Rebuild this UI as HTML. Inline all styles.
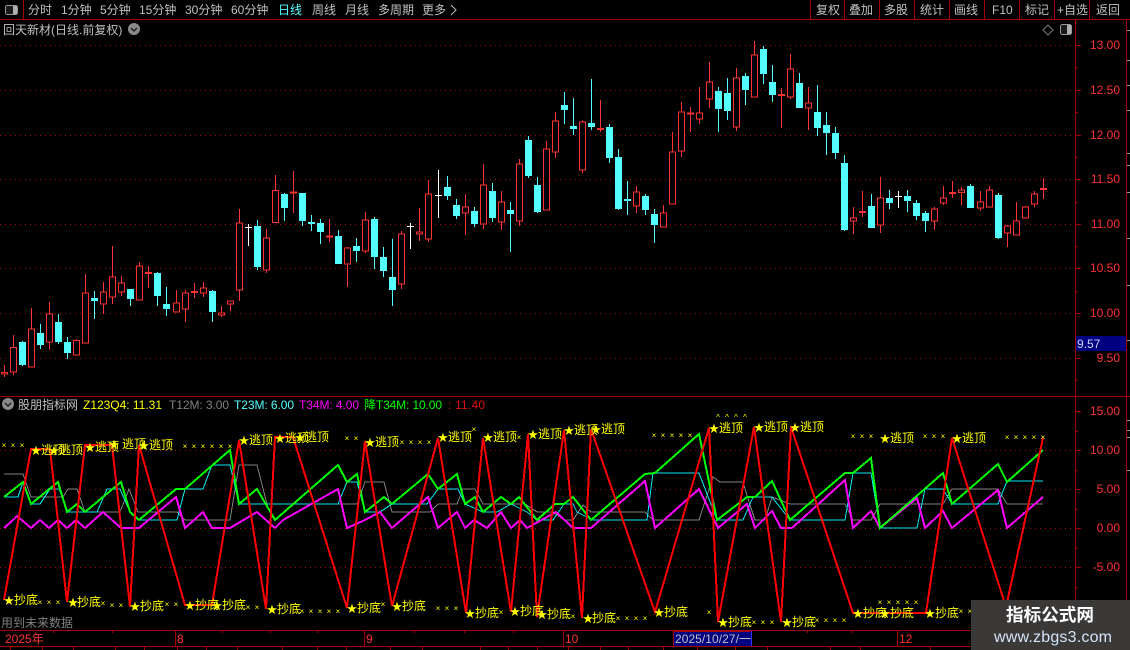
<!DOCTYPE html>
<html><head><meta charset="utf-8"><title>回天新材</title>
<style>
html,body{margin:0;padding:0;background:#000;width:1130px;height:650px;overflow:hidden}
svg{display:block;position:absolute;left:0;top:0}
text{font-family:"Liberation Sans","WenQuanYi Zen Hei","Noto Sans CJK SC",sans-serif;font-size:12px}
.m{fill:#c0c0c0}
.a{fill:#ff3232;text-anchor:end}
.t{fill:#ff3232}
.y{fill:#ffff00}
.st{fill:#ffff00;font-family:"DejaVu Sans",sans-serif;font-size:13px;text-anchor:middle}
.xx{fill:#ffff00;font-size:8px;text-anchor:middle}
.c{shape-rendering:crispEdges}
.rw{stroke:#ff3232;stroke-width:3;fill:none}
.cw{stroke:#54ffff;stroke-width:3;fill:none}
.ww{stroke:#fff;stroke-width:3;fill:none}
.rb{stroke:#ff3232;stroke-width:3;fill:#000}
.cb{fill:#54ffff}
.rf{fill:#ff3232}
.wf{fill:#fff}
.g{stroke:#a01010;stroke-width:1;stroke-dasharray:1 4;fill:none}
.l{stroke:#a80000;stroke-width:1;fill:none}
.ln{fill:none;shape-rendering:crispEdges;stroke-linejoin:miter}
</style></head><body>
<svg width="1130" height="650" viewBox="0 0 1130 650">
<rect width="1130" height="650" fill="#000"/>

<!-- grid -->
<path class="g c" d="M0 45.5H1075M0 90.5H1075M0 135.5H1075M0 179.5H1075M0 224.5H1075M0 268.5H1075M0 313.5H1075M0 358.5H1075M0 450.5H1075M0 489.5H1075M0 528.5H1075M0 567.5H1075"/>

<!-- frame lines -->
<g class="c">
<path class="l" d="M0 19.5H1130M23.5 0V19M810.5 0V19M844.5 0V19M879.5 0V19M914.5 0V19M949.5 0V19M984.5 0V19M1019.5 0V19M1054.5 0V19M1089.5 0V19M1075.5 20V630M1126.5 20V630M0 396.5H1130M0 630.5H1130M0 646.5H1130"/>
<path class="l" d="M1075 45.5h6M1075 90.5h6M1075 135.5h6M1075 179.5h6M1075 224.5h6M1075 268.5h6M1075 313.5h6M1075 358.5h6M1075 67.5h3M1075 112.5h3M1075 157.5h3M1075 202.5h3M1075 246.5h3M1075 291.5h3M1075 336.5h3M1075 380.5h3M1075 411.5h6M1075 450.5h6M1075 489.5h6M1075 528.5h6M1075 567.5h6M1075 431.5h3M1075 470.5h3M1075 509.5h3M1075 548.5h3M1075 587.5h3"/>
<path stroke="#999" d="M1127 30.5h3M1127 60.5h3M1127 85.5h3M1127 110.5h3M1127 153.5h3M1127 165.5h3M1127 192.5h3M1127 238.5h3M1127 285.5h3M1127 340.5h3M1127 420.5h3M1127 430.5h3M1127 437.5h3M1127 470.5h3"/>
<path class="l" d="M175.5 631V646M364.5 631V646M563.5 631V646M897.5 631V646M53.5 631v2M112.5 631v2M222.5 631v2M270.5 631v2M317.5 631v2M414.5 631v2M464.5 631v2M513.5 631v2M807.5 631v2M852.5 631v2M10.5 647v3M42.5 647v3M73.5 647v3M115.5 647v3M144.5 647v3M177.5 647v3M206.5 647v3M237.5 647v3M282.5 647v3M317.5 647v3M346.5 647v3M390.5 647v3M422.5 647v3M480.5 647v3M508.5 647v3M537.5 647v3M568.5 647v3M600.5 647v3M628.5 647v3M663.5 647v3M697.5 647v3M735.5 647v3M767.5 647v3M830.5 647v3M860.5 647v3M930.5 647v3"/>
<rect x="673.5" y="631.5" width="78" height="15" fill="#000080" stroke="#a80000"/>
<rect x="1076" y="336" width="50" height="15" fill="#000080"/>
<path d="M751.5 631V646" stroke="#3030ff"/>
</g>

<!-- toolbar -->
<rect x="5.5" y="5.5" width="12" height="9" rx="2" fill="#1a1a1a" stroke="#9a9a9a"/><rect x="13" y="6" width="4" height="8" fill="#b0b0b0"/>
<g class="m">
<text x="28" y="14">分时</text><text x="61" y="14">1分钟</text><text x="100" y="14">5分钟</text><text x="139" y="14">15分钟</text><text x="185" y="14">30分钟</text><text x="231" y="14">60分钟</text>
<text x="278" y="14" style="fill:#54ffff">日线</text><text x="312" y="14">周线</text><text x="345" y="14">月线</text><text x="378" y="14">多周期</text><text x="422" y="14">更多</text>
<text x="816" y="14">复权</text><text x="849" y="14">叠加</text><text x="884" y="14">多股</text><text x="920" y="14">统计</text><text x="954" y="14">画线</text><text x="992" y="14">F10</text><text x="1025" y="14">标记</text><text x="1057" y="14">+自选</text><text x="1096" y="14">返回</text>
<text x="3" y="34">回天新材(日线.前复权)</text>
</g>
<path d="M451 5l5 5-5 5" stroke="#c0c0c0" fill="none"/>
<circle cx="134" cy="29" r="6" fill="#8a8a8a"/><path d="M131 28l3 3 3-3" stroke="#222" stroke-width="1.5" fill="none"/>
<path d="M1048 25l5 5-5 5-5-5z" fill="none" stroke="#777"/>
<rect x="1060.5" y="24.5" width="11" height="10" rx="2" fill="#1a1a1a" stroke="#9a9a9a"/><rect x="1067" y="25" width="4" height="9" fill="#b0b0b0"/>

<!-- candles A -->
<g class="c" transform="translate(0.1667,200) scale(.33333)">
<path class="rw" d="M13 495V531M40 405V525M94 324V503M148 306V450M229 417V467M256 222V431M310 246V342M337 138V312M364 228V288M418 186V302M445 198V264M529 270V338M556 270V366M583 249V294M610 246V291M664 318V351M691 301V333M718 27V303M799 87V219"/>
<path class="cw" d="M67 423V498M121 372V447M175 342V432M202 411V477M283 273V357M391 267V318M472 216V318M499 261V348M637 270V366M772 60V210"/>
<path class="ww" d="M745 72V138"/>
<path class="rb" d="M4 517.5h18V522.5h-18zM31 442.5h18V516.5h-18zM85 386.5h18V501.5h-18zM139 341.5h18V426.5h-18zM220 421.5h18V465.5h-18zM247 278.5h18V429.5h-18zM301 275.5h18V312.5h-18zM328 230.5h18V291.5h-18zM355 248.5h18V276.5h-18zM409 197.5h18V300.5h-18zM520 308.5h18V336.5h-18zM547 278.5h18V327.5h-18zM601 263.5h18V279.5h-18zM655 338.5h18V345.5h-18zM682 302.5h18V312.5h-18zM709 68.5h18V270.5h-18zM790 113.5h18V210.5h-18z"/>
<path class="cb" d="M56.5 426h21V495h-21zM110.5 399h21V435h-21zM164.5 366h21V426h-21zM191.5 426h21V459h-21zM272.5 294h21V303h-21zM380.5 267h21V297h-21zM461.5 219h21V288h-21zM488.5 312h21V327h-21zM626.5 273h21V336h-21zM761.5 78h21V201h-21z"/>
<path class="rf" d="M434.5 216h21V222h-21zM572.5 273h21V279h-21z"/>
<path class="wf" d="M734.5 81h21V84h-21z"/>
</g>
<!-- candles B -->
<g class="c" transform="translate(280.1667,130) scale(.33333)">
<path class="rw" d="M40 123V249M148 267V336M202 351V471M256 246V369M364 303V477M418 234V333M445 150V336M556 192V315M610 102V297M664 183V300M718 87V288M799 33V242"/>
<path class="cw" d="M13 189V273M67 189V288M94 255V303M121 267V342M175 300V402M229 324V396M283 261V417M310 351V441M337 327V528M502 138V210M529 207V267M583 231V291M637 159V276M691 216V366M745 18V144M772 141V249"/>
<path class="ww" d="M391 279V357M475 120V264"/>
<path class="rb" d="M31 185.5h18V188.5h-18zM139 317.5h18V321.5h-18zM193 353.5h18V402.5h-18zM247 269.5h18V363.5h-18zM355 311.5h18V462.5h-18zM409 305.5h18V312.5h-18zM436 191.5h18V327.5h-18zM547 230.5h18V248.5h-18zM601 164.5h18V282.5h-18zM655 215.5h18V276.5h-18zM709 101.5h18V273.5h-18zM790 56.5h18V240.5h-18z"/>
<path class="cb" d="M2.5 192h21V234h-21zM56.5 189h21V273h-21zM83.5 276h21V282h-21zM110.5 279h21V306h-21zM164.5 318h21V402h-21zM218.5 348h21V363h-21zM272.5 267h21V381h-21zM299.5 381h21V423h-21zM326.5 441h21V480h-21zM491.5 171h21V198h-21zM518.5 225h21V258h-21zM572.5 243h21V282h-21zM626.5 183h21V264h-21zM680.5 240h21V252h-21zM734.5 30h21V138h-21zM761.5 165h21V246h-21z"/>
<path class="wf" d="M380.5 288h21V291h-21zM464.5 195h21V198h-21z"/>
</g>
<!-- candles C -->
<g class="c" transform="translate(540.1667,30) scale(.33333)">
<path class="rw" d="M46 246V384M127 271V429M181 210V306M289 468V549M370 525V593M397 306V524M424 216V381M451 231V306M478 171V282M508 96V234M589 114V303M643 33V203M724 174V294M751 72V207M805 171V300"/>
<path class="cw" d="M73 186V282M100 204V315M154 147V300M208 282V399M235 357V540M262 453V555M316 492V555M343 537V639M535 171V306M562 144V270M616 129V225M670 48V162M697 105V216M778 129V234M832 165V318"/>
<path class="rb" d="M37 272.5h18V366.5h-18zM118 275.5h18V420.5h-18zM280 485.5h18V528.5h-18zM361 548.5h18V591.5h-18zM388 365.5h18V522.5h-18zM415 245.5h18V363.5h-18zM442 248.5h18V252.5h-18zM469 248.5h18V267.5h-18zM499 155.5h18V207.5h-18zM580 143.5h18V291.5h-18zM634 74.5h18V201.5h-18zM742 116.5h18V201.5h-18zM796 218.5h18V234.5h-18z"/>
<path class="cb" d="M62.5 225h21V240h-21zM89.5 288h21V297h-21zM143.5 279h21V291h-21zM197.5 291h21V384h-21zM224.5 381h21V537h-21zM251.5 507h21V513h-21zM305.5 498h21V540h-21zM332.5 552h21V585h-21zM524.5 183h21V237h-21zM551.5 189h21V243h-21zM605.5 138h21V180h-21zM659.5 57h21V132h-21zM686.5 156h21V195h-21zM767.5 159h21V234h-21zM821.5 246h21V294h-21z"/>
<path class="rf" d="M170.5 294h21V300h-21zM713.5 192h21V198h-21z"/>
</g>
<!-- candles D -->
<g class="c" transform="translate(810.1667,140) scale(.33333)">
<path class="rw" d="M130 201V282M157 153V231M211 111V279M373 201V270M400 138V195M427 123V174M454 141V195M511 153V213M538 138V203M592 255V321M619 186V287M646 198V236M673 153V201M700 114V177"/>
<path class="cw" d="M49 -84V45M76 -39V57M103 45V273M184 162V264M238 150V207M292 150V216M319 180V240M346 213V276M481 132V204M565 159V297"/>
<path class="ww" d="M265 153V204"/>
<path class="rb" d="M121 233.5h18V243.5h-18zM202 173.5h18V255.5h-18zM364 206.5h18V243.5h-18zM391 173.5h18V189.5h-18zM445 149.5h18V157.5h-18zM502 185.5h18V204.5h-18zM529 149.5h18V201.5h-18zM583 257.5h18V279.5h-18zM610 242.5h18V285.5h-18zM637 200.5h18V234.5h-18zM664 161.5h18V192.5h-18z"/>
<path class="cb" d="M38.5 -45h21V-21h-21zM65.5 -21h21V39h-21zM92.5 69h21V270h-21zM173.5 198h21V264h-21zM227.5 174h21V189h-21zM281.5 168h21V183h-21zM308.5 189h21V228h-21zM335.5 219h21V243h-21zM470.5 138h21V204h-21zM554.5 165h21V294h-21z"/>
<path class="rf" d="M146.5 213h21V219h-21zM416.5 156h21V162h-21zM689.5 144h21V150h-21z"/>
<path class="wf" d="M254.5 168h21V171h-21z"/>
</g>
<path class="c" d="M275.5 175V191" stroke="#ff3232" fill="none"/>
<rect class="c" x="272.5" y="190.5" width="6" height="32" fill="#000" stroke="#ff3232"/>

<!-- axis labels -->
<g>
<text class="a" x="1120" y="49">13.00</text><text class="a" x="1120" y="94">12.50</text><text class="a" x="1120" y="139">12.00</text><text class="a" x="1120" y="183">11.50</text><text class="a" x="1120" y="228">11.00</text><text class="a" x="1120" y="272">10.50</text><text class="a" x="1120" y="317">10.00</text><text class="a" x="1120" y="362">9.50</text>
<text x="1077" y="348" style="fill:#c8d8ff">9.57</text>
<text class="a" x="1120" y="415">15.00</text><text class="a" x="1120" y="454">10.00</text><text class="a" x="1120" y="493">5.00</text><text class="a" x="1120" y="532">0.00</text><text class="a" x="1120" y="571">-5.00</text>
</g>

<!-- indicator header -->
<circle cx="8" cy="404" r="6" fill="#8a8a8a"/><path d="M5 403l3 3 3-3" stroke="#222" stroke-width="1.5" fill="none"/>
<text x="18" y="409" class="m">股朋指标网</text>
<text x="83" y="409" class="y" textLength="79">Z123Q4: 11.31</text>
<text x="169" y="409" style="fill:#808080" textLength="60">T12M: 3.00</text>
<text x="234" y="409" style="fill:#54ffff" textLength="60">T23M: 6.00</text>
<text x="299" y="409" style="fill:#ff00ff" textLength="60">T34M: 4.00</text>
<text x="364" y="409" style="fill:#00ff00" textLength="78">降T34M: 10.00</text>
<text x="448" y="409" style="fill:#e01010" textLength="37">: 11.40</text>

<!-- indicator lines -->
<polyline class="ln" stroke="#808080" points="4,474 23,474 31,497 63,497 68,489 77,489 85,512 120,512 129,489 138,512 177,512 185,520 230,520 239,465 257,465 267,504 357,504 365,482 384,482 392,512 430,512 438,504 457,504 463,489 475,489 483,504 525,504 537,512 553,512 564,520 573,520 583,505 591,512 645,512 653,520 699,520 713,477 720,482 743,482 750,505 755,520 765,520 772,497 790,504 845,504 853,520 871,520 880,504 943,504 952,489 998,489 1007,504 1043,504"/>
<polyline class="ln" stroke="#00e8f0" points="4,497 18,497 23,482 31,504 40,504 50,489 59,489 68,512 97,512 107,489 120,489 130,512 140,520 177,520 185,489 203,489 212,465 230,465 239,504 338,504 347,482 357,482 365,512 380,512 392,504 427,504 438,489 458,489 465,504 483,512 497,512 511,504 527,512 537,520 553,520 564,504 573,504 577,512 593,520 647,520 653,473 699,473 717,520 743,520 753,497 772,497 790,520 845,520 853,473 871,473 880,528 917,528 925,489 943,489 952,504 998,504 1007,481 1043,481"/>
<polyline class="ln" stroke="#ff00ff" stroke-width="2" points="4,528 13,520 17,516 31,528 40,520 49,528 58,520 67,528 76,520 85,528 103,512 121,528 139,528 176,497 185,528 194,520 203,512 212,528 230,528 257,512 275,528 283,520 338,489 347,528 365,520 380,512 392,528 428,497 438,528 457,512 465,528 474,520 487,528 501,512 511,528 520,520 527,528 556,512 573,528 591,528 645,481 655,528 699,489 718,528 747,504 755,528 772,511 781,528 792,528 845,480 853,528 871,511 880,528 917,498 925,528 943,511 952,528 998,490 1007,528 1043,497"/>
<polyline class="ln" stroke="#00ff00" stroke-width="2" points="4,497 23,482 31,504 58,482 67,512 77,504 85,512 121,482 130,512 139,520 176,489 185,489 230,450 239,504 257,489 275,520 338,465 347,482 357,474 365,512 384,497 392,504 428,474 438,489 457,474 465,504 475,497 483,512 501,497 511,504 519,497 537,520 555,504 564,504 573,497 591,520 645,474 655,473 699,434 717,520 738,504 747,497 755,497 772,481 790,520 845,473 853,473 871,458 880,528 943,473 952,504 998,464 1007,482 1043,450"/>
<polyline class="ln" stroke="#ff0000" stroke-width="2" points="4,600 31,449 50,449 67,602 85,445 112,445 130,607 139,445 185,605 212,605 239,440 266,609 275,437 293,437 347,608 365,441 392,606 438,438 466,613 483,438 511,612 528,434 537,617 564,430 582,618 591,429 655,612 709,428 718,622 754,427 781,622 791,427 853,613 926,613 952,438 1006,607 1043,438"/>

<!-- crosses -->
<text class="xx" x="4 13 22 185 194 203 212 221 230 347 356 402 411 420 429 474 519 654 663 672 681 690 853 862 871 925 934 943 1007 1016 1025 1034 1043" y="448 448 448 449 449 449 449 449 449 441 441 445 445 445 445 432 440 438 438 438 438 438 439 439 439 439 439 439 440 440 440 440 440">×××××××××××××××××××××××××××××××××</text>
<text class="xx" x="40 49 58 103 112 121 167 176 248 257 302 311 320 329 338 383 438 447 456 501 573 618 627 636 645 709 754 763 772 817 826 835 844 880 889 898 907 916 961 970" y="605 605 605 606 608 608 607 607 610 610 614 614 614 614 614 607 611 611 611 615 619 621 621 621 621 615 625 625 625 623 623 623 623 605 605 605 605 605 614 614">××××××××××××××××××××××××××××××××××××××××</text>
<text class="xx" x="718 727 736 745" y="420 420 420 420">^^^^</text>

<!-- stars -->
<text class="st" x="36 54 90 114 144 244 280 300 370 443 488 533 569 596 714 759 795 885 957" y="455 455 452 449 450 445 443 442 447 442 442 439 435 434 433 432 432 443 443">★★★★★★★★★★★★★★★★★★★</text>
<text class="st" x="9 73 135 190 217 272 352 397 470 515 542 588 659 723 787 858 885 930" y="605 607 611 610 610 614 613 611 618 616 619 623 617 627 627 618 618 618">★★★★★★★★★★★★★★★★★★</text>

<!-- labels -->
<g class="y">
<text x="41" y="454">逃顶</text><text x="59" y="454">逃顶</text><text x="95" y="451">逃顶</text><text x="122" y="448">逃顶</text><text x="149" y="449">逃顶</text><text x="249" y="444">逃顶</text><text x="285" y="442">逃顶</text><text x="305" y="441">逃顶</text><text x="375" y="446">逃顶</text><text x="448" y="441">逃顶</text><text x="493" y="441">逃顶</text><text x="538" y="438">逃顶</text><text x="574" y="434">逃顶</text><text x="601" y="433">逃顶</text><text x="719" y="432">逃顶</text><text x="764" y="431">逃顶</text><text x="800" y="431">逃顶</text><text x="890" y="442">逃顶</text><text x="962" y="442">逃顶</text>
<text x="14" y="604">抄底</text><text x="77" y="606">抄底</text><text x="140" y="610">抄底</text><text x="195" y="609">抄底</text><text x="222" y="609">抄底</text><text x="277" y="613">抄底</text><text x="357" y="612">抄底</text><text x="402" y="610">抄底</text><text x="475" y="617">抄底</text><text x="520" y="615">抄底</text><text x="547" y="618">抄底</text><text x="592" y="622">抄底</text><text x="664" y="616">抄底</text><text x="728" y="626">抄底</text><text x="792" y="626">抄底</text><text x="863" y="617">抄底</text><text x="890" y="617">抄底</text><text x="935" y="617">抄底</text>
</g>

<text x="1" y="627" style="fill:#808080">用到未来数据</text>

<!-- time axis -->
<text class="t" x="5" y="643">2025年</text><text class="t" x="177" y="643">8</text><text class="t" x="366" y="643">9</text><text class="t" x="565" y="643">10</text><text class="t" x="899" y="643">12</text>
<text x="675" y="643" class="m" textLength="76">2025/10/27/一</text>

<!-- watermark -->
<rect x="971" y="600" width="159" height="50" fill="#3b3937"/>
<text x="1006" y="621" style="font-size:17.6px;font-weight:bold;fill:#fff">指标公式网</text>
<text x="994" y="642" style="font-size:16px;fill:#d4e4f8" textLength="118">www.zbgs3.com</text>
</svg>
</body></html>
